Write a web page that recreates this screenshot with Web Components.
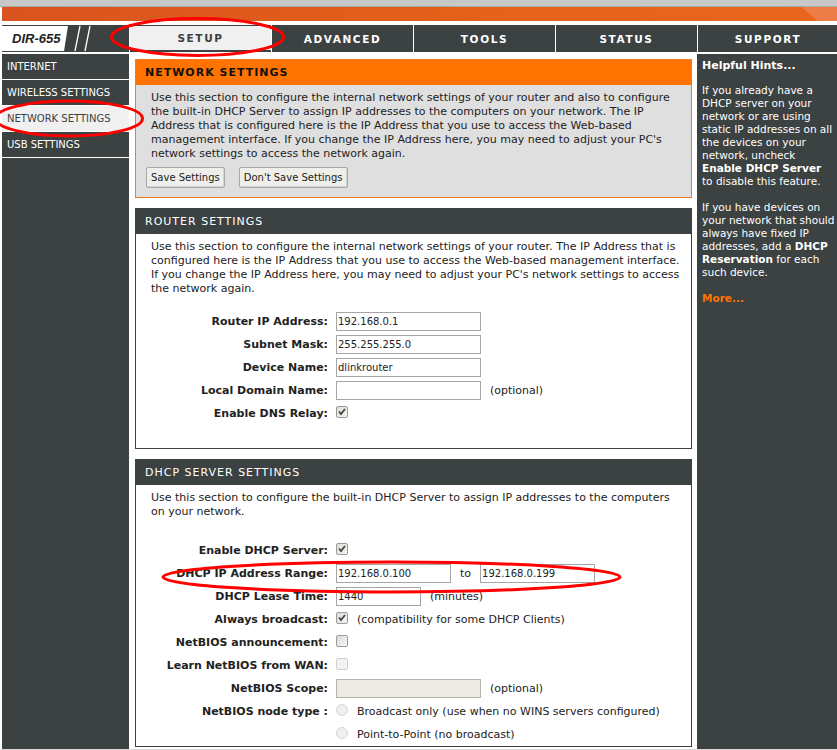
<!DOCTYPE html>
<html>
<head>
<meta charset="utf-8">
<title>DIR-655</title>
<style>
    html, body { margin: 0; background: #fff; }
    body { width: 837px; height: 750px; overflow: hidden; font-family: "DejaVu Sans", sans-serif; }
</style>
</head>
<body>
<router-page>
    <nav-bar slot="nav">
        <nav-tab active>SETUP</nav-tab>
        <nav-tab>ADVANCED</nav-tab>
        <nav-tab>TOOLS</nav-tab>
        <nav-tab>STATUS</nav-tab>
        <nav-tab>SUPPORT</nav-tab>
    </nav-bar>
    <side-menu slot="menu">
        <menu-item>INTERNET</menu-item>
        <menu-item>WIRELESS SETTINGS</menu-item>
        <menu-item active>NETWORK SETTINGS</menu-item>
        <menu-item>USB SETTINGS</menu-item>
    </side-menu>

    <settings-box kind="orange" heading="NETWORK SETTINGS">
        <box-text>Use this section to configure the internal network settings of your router and also to configure the built-in DHCP Server to assign IP addresses to the computers on your network. The IP Address that is configured here is the IP Address that you use to access the Web-based management interface. If you change the IP Address here, you may need to adjust your PC's network settings to access the network again.</box-text>
        <button-row>
            <flat-button>Save Settings</flat-button>
            <flat-button>Don't Save Settings</flat-button>
        </button-row>
    </settings-box>

    <settings-box heading="ROUTER SETTINGS" height="241">
        <box-text>Use this section to configure the internal network settings of your router. The IP Address that is configured here is the IP Address that you use to access the Web-based management interface. If you change the IP Address here, you may need to adjust your PC's network settings to access the network again.</box-text>
        <form-table top="14">
            <form-row label="Router IP Address:"><text-field value="192.168.0.1"></text-field></form-row>
            <form-row label="Subnet Mask:"><text-field value="255.255.255.0"></text-field></form-row>
            <form-row label="Device Name:"><text-field value="dlinkrouter"></text-field></form-row>
            <form-row label="Local Domain Name:"><text-field></text-field><note-text>(optional)</note-text></form-row>
            <form-row label="Enable DNS Relay:"><check-mark checked></check-mark></form-row>
        </form-table>
    </settings-box>

    <settings-box heading="DHCP SERVER SETTINGS">
        <box-text>Use this section to configure the built-in DHCP Server to assign IP addresses to the computers on your network.</box-text>
        <form-table top="20">
            <form-row label="Enable DHCP Server:"><check-mark checked></check-mark></form-row>
            <form-row label="DHCP IP Address Range:"><text-field width="115" value="192.168.0.100"></text-field><note-text>to</note-text><text-field width="115" value="192.168.0.199"></text-field></form-row>
            <form-row label="DHCP Lease Time:"><text-field width="85" value="1440"></text-field><note-text>(minutes)</note-text></form-row>
            <form-row label="Always broadcast:"><check-mark checked></check-mark><note-text>(compatibility for some DHCP Clients)</note-text></form-row>
            <form-row label="NetBIOS announcement:"><check-mark></check-mark></form-row>
            <form-row label="Learn NetBIOS from WAN:"><check-mark disabled></check-mark></form-row>
            <form-row label="NetBIOS Scope:"><text-field disabled></text-field><note-text>(optional)</note-text></form-row>
            <form-row label="NetBIOS node type :"><check-mark round></check-mark><note-text>Broadcast only (use when no WINS servers configured)</note-text></form-row>
            <form-row><check-mark round></check-mark><note-text>Point-to-Point (no broadcast)</note-text></form-row>
        </form-table>
    </settings-box>

    <hints-panel slot="hints">
        <p>If you already have a DHCP server on your network or are using static IP addresses on all the devices on your network, uncheck <b>Enable DHCP Server</b> to disable this feature.</p>
        <p>If you have devices on your network that should always have fixed IP addresses, add a <b>DHCP Reservation</b> for each such device.</p>
    </hints-panel>
</router-page>

<script>
// cada elemento guarda su html y sus estilos en el shadow root
function define(name, html, setup) {
    customElements.define(name, class extends HTMLElement {
        constructor() {
            super();
            this.attachShadow({ mode: "open" });
            this.shadowRoot.innerHTML = html;
        }
        connectedCallback() {
            if (setup) setup(this, this.shadowRoot);
        }
    });
}

const FONT = '"DejaVu Sans", sans-serif';

define("router-page", `
    <style>
        :host { display: block; position: relative; width: 837px; height: 750px; overflow: hidden; background: #fff; font-family: ${FONT}; }
        .strip { height: 6px; background: #c8c8c8; border-bottom: 1px solid #a9a9a9; }
        .banner { height: 14px; margin-left: 2px; background: linear-gradient(90deg, #d9531e, #e4621a 60%, #e8661c); position: relative; overflow: hidden; }
        .banner i { position: absolute; right: 0; top: 0; bottom: 0; width: 36px; background: #ec7d46; clip-path: polygon(0 0, 100% 0, 100% 100%, 46% 100%); }
        .gap { height: 4px; }
        .columns { display: grid; grid-template-columns: 127px 1fr 140px; gap: 0 1px; margin-left: 2px; height: 695px; background: #fff; }
        .middle { overflow: hidden; padding: 5px 4px 0 5px; display: flex; flex-direction: column; gap: 10px; }
        .foot { height: 1px; background: #d8d8d8; }
        .marks { position: absolute; left: 0; top: 0; pointer-events: none; }
        ellipse { fill: none; stroke: #f00; stroke-width: 3; }
    </style>
    <div class="strip"></div>
    <div class="banner"><i></i></div>
    <div class="gap"></div>
    <slot name="nav"></slot>
    <div class="columns">
        <slot name="menu"></slot>
        <div class="middle"><slot></slot></div>
        <slot name="hints"></slot>
    </div>
    <div class="foot"></div>
    <svg class="marks" width="837" height="750" viewBox="0 0 837 750">
        <ellipse cx="197.5" cy="37" rx="86" ry="18.5"/>
        <ellipse cx="69" cy="118.5" rx="73.5" ry="17.5"/>
        <ellipse cx="391.5" cy="577" rx="228.5" ry="15"/>
    </svg>
`);

define("nav-bar", `
    <style>
        :host { display: flex; height: 27px; margin-left: 2px; background: #3c4142; border-bottom: 2px solid #fff; gap: 1px; }
        .logo { width: 127px; flex: none; position: relative; }
        .plate { display: flex; align-items: center; height: 25px; width: 66px; margin-top: 1px; padding-left: 10px; box-sizing: border-box; background: #fff; clip-path: polygon(0 0, 100% 0, 94% 100%, 0 100%); font: italic bold 13px "Liberation Sans", sans-serif; color: #222; }
        svg { position: absolute; left: 66px; top: 0; }
        .tabs { flex: 1; display: grid; grid-template-columns: 141px 141px 141px 141px 140px; gap: 1px; }
    </style>
    <div class="logo">
        <div class="plate">DIR-655</div>
        <svg width="26" height="27"><path d="M12 1 L7 26 M22 1 L17 26" stroke="#fff" stroke-width="1.3" fill="none"/></svg>
    </div>
    <div class="tabs"><slot></slot></div>
`);

define("nav-tab", `
    <style>
        :host { display: flex; align-items: center; justify-content: center; height: 27px; box-shadow: -1px 0 0 #fff; color: #fff; font: bold 10.5px ${FONT}; letter-spacing: 1.6px; }
        :host([active]) { background: #f0f0f0; color: #3c4142; box-sizing: border-box; border: 1px solid #3c4142; border-width: 1px 0 2px; }
    </style>
    <slot></slot>
`);

define("side-menu", `
    <style>
        :host { display: block; background: #3c4142; height: 695px; }
    </style>
    <slot></slot>
`);

define("menu-item", `
    <style>
        :host { display: flex; align-items: center; height: 25px; padding-left: 5px; margin-bottom: 1px; box-shadow: 0 1px 0 #fff; color: #fff; font: 10px ${FONT}; }
        :host([active]) { background: #f0f0f0; color: #3c4142; }
    </style>
    <slot></slot>
`);

define("settings-box", `
    <style>
        :host { display: block; flex: none; box-sizing: border-box; border: 1px solid #3c4142; background: #fff; }
        :host([kind="orange"]) { border-color: #f57a20; background: #dfdfdf; height: 139px; }
        h2 { margin: 0; height: 25px; display: flex; align-items: center; padding-left: 9px; background: #3c4142; color: #fff; font: 11px ${FONT}; letter-spacing: 1px; }
        :host([kind="orange"]) h2 { background: #ff7300; color: #111; font-weight: bold; border-bottom: 0; }
        .body { padding: 6px 9px 0; }
    </style>
    <h2></h2>
    <div class="body"><slot></slot></div>
`, (el, root) => {
    root.querySelector("h2").textContent = el.getAttribute("heading");
    if (el.hasAttribute("height")) el.style.height = el.getAttribute("height") + "px";
});

define("box-text", `
    <style>
        :host { display: block; font: 11px/14px ${FONT}; color: #222; padding-left: 6px; }
    </style>
    <slot></slot>
`);

define("button-row", `
    <style>
        :host { display: flex; gap: 14px; margin-top: 6px; padding-left: 1px; }
    </style>
    <slot></slot>
`);

define("flat-button", `
    <style>
        :host { display: flex; align-items: center; height: 21px; box-sizing: border-box; padding: 0 4px; background: #eeeeea; border: 1px solid #a8a8a8; border-radius: 2px; box-shadow: inset -1px -1px 0 #d5d5d0; font: 10px ${FONT}; color: #222; }
    </style>
    <slot></slot>
`);

define("form-table", `
    <style>
        :host { display: block; }
    </style>
    <slot></slot>
`, (el) => { el.style.marginTop = el.getAttribute("top") + "px"; });

define("form-row", `
    <style>
        :host { display: grid; grid-template-columns: 183px 1fr; column-gap: 8px; align-items: center; height: 23px; color: #222; }
        label { text-align: right; font: bold 11px ${FONT}; }
        .cell { display: flex; align-items: center; gap: 9px; }
    </style>
    <label></label>
    <div class="cell"><slot></slot></div>
`, (el, root) => {
    root.querySelector("label").textContent = el.getAttribute("label") || "";
});

define("text-field", `
    <style>
        :host { display: block; flex: none; }
        input { display: block; width: 145px; height: 19px; box-sizing: border-box; margin: 0; padding: 1px; border: 1px solid #a5a5a5; background: #fff; color: #222; font: 10px ${FONT}; outline: none; }
        input:disabled { background: #ebebe4; border-color: #b5b5ae; }
    </style>
    <input type="text">
`, (el, root) => {
    const input = root.querySelector("input");
    input.value = el.getAttribute("value") || "";
    input.disabled = el.hasAttribute("disabled");
    if (el.hasAttribute("width")) input.style.width = el.getAttribute("width") + "px";
});

define("check-mark", `
    <style>
        :host { display: block; flex: none; box-sizing: border-box; width: 12px; height: 12px; margin: -3px 0 0 0; border: 1px solid #9a9a9a; border-radius: 2px; background: linear-gradient(135deg, #dcdcd8, #f5f5f2); }
        :host([disabled]) { border-color: #cfcfcf; background: #f3f3f3; }
        :host([round]) { border-radius: 50%; border-color: #d5d5d5; background: #f0f0f0; }
        svg { display: none; }
        :host([checked]) svg { display: block; }
    </style>
    <svg width="10" height="10" viewBox="0 0 10 10"><path d="M2 4.5 L4 7 L8 2" fill="none" stroke="#444" stroke-width="1.8"/></svg>
`);

define("note-text", `
    <style>
        :host { display: block; font: 11px ${FONT}; color: #222; }
    </style>
    <slot></slot>
`);

define("hints-panel", `
    <style>
        :host { display: block; height: 695px; background: #3c4142; color: #fff; box-sizing: border-box; padding: 5px 2px 0 5px; font: 10.5px/13px ${FONT}; }
        h3 { margin: 0 0 12px; font: bold 11px/13px ${FONT}; }
        ::slotted(p) { margin: 0 0 13px; }
        .more { display: block; margin-top: 6px; color: #ff7300; font-weight: bold; }
    </style>
    <h3>Helpful Hints...</h3>
    <slot></slot>
    <span class="more">More...</span>
`);
</script>
</body>
</html>
